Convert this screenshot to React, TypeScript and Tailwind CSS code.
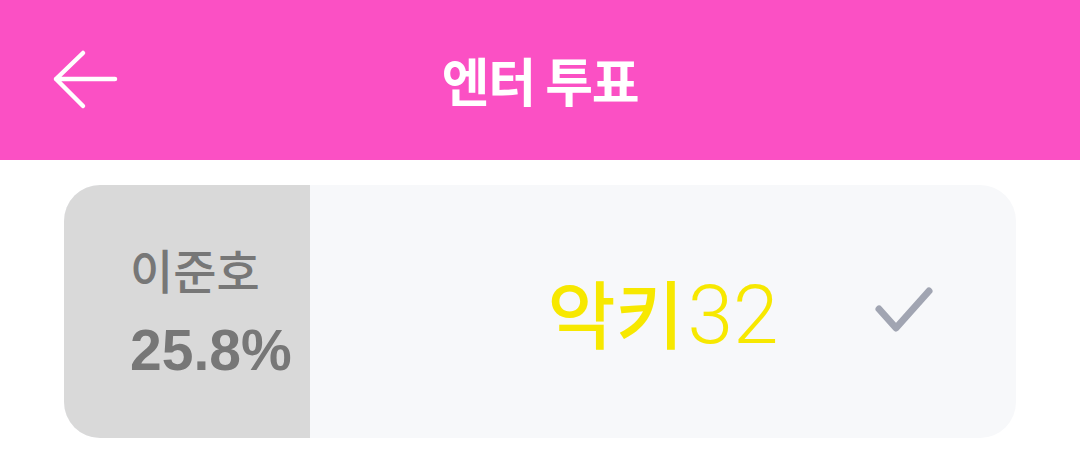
export default function App() {
  return (
    <div className="w-[1080px] h-[464px] bg-white font-['Noto_Sans_CJK_KR','Noto_Sans',sans-serif] overflow-hidden">
      {/* top bar */}
      <header className="h-[160px] bg-[#fb50c4] grid grid-cols-[1fr_auto_1fr] items-center">
        <div className="pl-[50px]">
          <svg
            width="72"
            height="72"
            viewBox="0 0 72 72"
            fill="none"
            stroke="white"
            strokeWidth="4.5"
            strokeLinecap="round"
            strokeLinejoin="round"
          >
            <path d="M33 9 L6 35 L33 62 M6 35 H65" />
          </svg>
        </div>
        <h1 className="text-white text-[52px] font-bold leading-none tracking-tight">엔터 투표</h1>
        <div />
      </header>

      {/* vote card */}
      <div className="mx-16 mt-[25px] h-[253px] rounded-[36px] overflow-hidden flex bg-[#f7f8fa]">
        <div className="w-[246px] bg-[#d9d9d9] pl-[66px] flex flex-col justify-center gap-[30px] text-[#777777]">
          <span className="text-[47px] font-medium leading-none">이준호</span>
          <span className="text-[57px] font-bold leading-none font-['Liberation_Sans',sans-serif]">25.8%</span>
        </div>
        <div className="flex-1 grid grid-cols-[1fr_auto_1fr] items-center">
          <div />
          <div className="text-[#f7e800] leading-none flex items-baseline pt-[6px]">
            <span className="text-[74px] font-medium">악키</span>
            <span className="text-[82px] font-light font-['Roboto',sans-serif] ml-[4px]">32</span>
          </div>
          <div className="flex justify-end pr-[80px]">
            <svg
              width="64"
              height="64"
              viewBox="0 0 64 64"
              fill="none"
              stroke="#a1a5b2"
              strokeWidth="7"
              strokeLinecap="round"
              strokeLinejoin="round"
            >
              <path d="M7 29 L24 48 L57 11" />
            </svg>
          </div>
        </div>
      </div>
    </div>
  );
}
